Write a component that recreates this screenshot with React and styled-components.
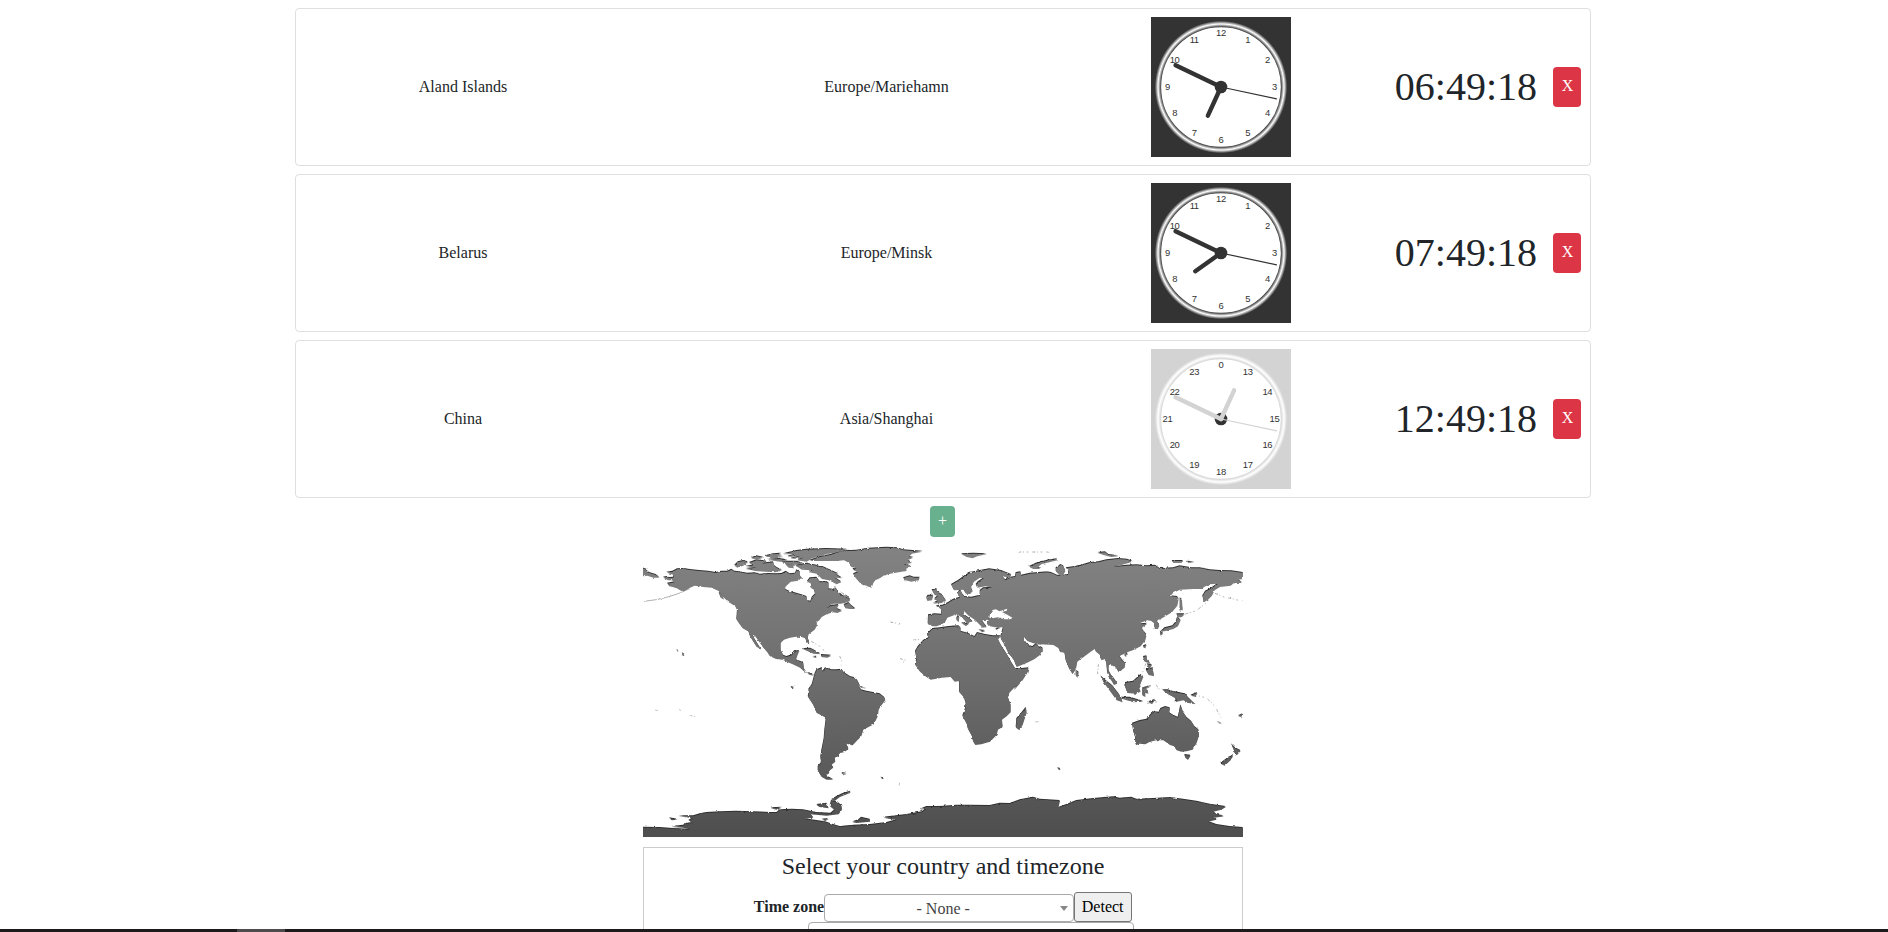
import React from "react";
import styled, { createGlobalStyle } from "styled-components";

const GlobalStyle = createGlobalStyle`
  *, *::before, *::after { box-sizing: border-box; }
  html, body { height: 100%; overflow: hidden; }
  body {
    margin: 0;
    background: #fff;
    color: #212529;
    font: 16px/24px "Liberation Serif", "Times New Roman", serif;
  }
`;

const Page = styled.div`
  height: 932px;
  display: flex;
  flex-direction: column;
`;
const Main = styled.main`
  flex: 1;
  min-height: 0;
  overflow: hidden;
  display: flex;
  flex-direction: column;
  align-items: center;
  padding: 8px 2px 0 0;
`;
const Card = styled.section`
  flex: none;
  width: 1296px;
  height: 158px;
  margin-bottom: 8px;
  padding: 0 8px;
  display: grid;
  grid-template-columns: 318px 529px 140px 246px 44px;
  align-items: center;
  text-align: center;
  border: 1px solid rgba(0, 0, 0, 0.125);
  border-radius: 4px;
`;
const Cell = styled.div`
  min-width: 0;
`;
const Face = styled.svg`
  display: block;
  width: 140px;
  height: 140px;
`;
const Time = styled.div`
  text-align: right;
  font-size: 40px;
  line-height: 48px;
`;
const Button = styled.button`
  flex: none;
  padding: 0 0 2px;
  border: 0;
  border-radius: 4px;
  color: #fff;
  font: inherit;
  width: ${(p) => p.$width}px;
  height: ${(p) => p.$height}px;
  background: ${(p) => p.$color};
`;
const RemoveButton = styled(Button)`
  justify-self: end;
  padding: 0 0 2px 1px;
`;
const AddButton = styled(Button)`
  margin-right: 1px;
  padding-bottom: 1px;
`;
const Map = styled.svg`
  flex: none;
  display: block;
  width: 600px;
  height: 300px;
`;
const Panel = styled.section`
  flex: none;
  width: 600px;
  height: 180px;
  margin-top: 10px;
  border: 1px solid #ccc;
  display: flex;
  flex-direction: column;
  align-items: center;
`;
const Title = styled.h4`
  margin: 4px 0 0;
  font-size: 24px;
  line-height: 29px;
  font-weight: 400;
`;
const Field = styled.div`
  display: flex;
  align-items: flex-end;
  margin: 11px 0 0;
  height: 30px;
`;
const Label = styled.label`
  font-weight: 700;
  line-height: 30px;
`;
const Select = styled.div`
  width: ${(p) => p.$width}px;
  height: 28px;
  margin-left: ${(p) => p.$indent || 0}px;
  padding: 0 5px 0 18px;
  display: flex;
  align-items: center;
  justify-content: space-between;
  color: #444;
  border: 1px solid #aaa;
  border-radius: 4px;
  span { flex: 1; text-align: center; padding: 2px 17px 0 0; }
  i {
    border: solid transparent;
    border-width: 5px 4px 0;
    border-top-color: #888;
  }
`;
const Detect = styled.button`
  width: 58px;
  height: 30px;
  padding: 0 1px 0 0;
  font: inherit;
  color: #000;
  background: #efefef;
  border: 1px solid #767676;
  border-radius: 3px;
`;
const Taskbar = styled.footer`
  flex: none;
  height: 3px;
  padding-left: 237px;
  background: #1c1a1a;
`;
const ActiveTask = styled.div`
  width: 48px;
  height: 3px;
  background: #4d4b4b;
`;

const zones = [
  { country: "Aland Islands", zone: "Europe/Mariehamn", time: "06:49:18", hour: 204.6 },
  { country: "Belarus", zone: "Europe/Minsk", time: "07:49:18", hour: 234.6 },
  { country: "China", zone: "Asia/Shanghai", time: "12:49:18", hour: 24.6, pm: true },
];

function Clock({ hour, pm }) {
  const ink = pm ? "#d3d3d3" : "#333";
  const id = pm ? "rim-pm" : "rim-am";
  const numbers = Array.from({ length: 12 }, (_, i) => {
    const a = ((i + 1) * Math.PI) / 6;
    const n = pm ? (i + 13) % 24 : i + 1;
    return (
      <text key={n} x={53.55 * Math.sin(a)} y={-53.55 * Math.cos(a) + 2.7}>
        {n}
      </text>
    );
  });
  return (
    <Face viewBox="-70 -70 140 140">
      <defs>
        <radialGradient id={id} gradientUnits="userSpaceOnUse" cx="0" cy="0" r="66.15">
          <stop offset=".905" stopColor={ink} />
          <stop offset=".952" stopColor="#fff" />
          <stop offset="1" stopColor={ink} />
        </radialGradient>
      </defs>
      <rect x="-70" y="-70" width="140" height="140" fill={ink} />
      <circle r="63" fill="#fff" stroke={`url(#${id})`} strokeWidth="6.3" />
      <circle r="6.3" fill="#333" />
      <g fill="#333" fontSize="9.45" fontFamily="Liberation Sans, Arial, sans-serif" textAnchor="middle" letterSpacing="-.3">
        {numbers}
      </g>
      <g stroke={ink} strokeLinecap="round">
        <path d="M0 0V-31.5" strokeWidth="4.4" transform={`rotate(${hour})`} />
        <path d="M0 0V-50.4" strokeWidth="4.4" transform="rotate(295.7)" />
        <path d="M0 0V-56.7" strokeWidth="1.2" transform="rotate(102)" />
      </g>
    </Face>
  );
}

// Coastlines are kept as point lists, each measured from the corner of its map sheet.
const NW = [-9, 0];
const N = [591, 0];
const NE = [1191, 0];
const SW = [-9, 420];
const SE = [831, 420];

const trace = (...parts) => {
  const pts = [];
  for (const [[dx, dy], list] of parts) {
    for (const p of list.trim().split(/\s+/)) {
      const [x, y] = p.split(",").map(Number);
      pts.push(`${x + dx} ${y + dy}`);
    }
  }
  return `M${pts.join("L")}Z`;
};
const isles = (sheet, text) => text.split("|").map((s) => trace([sheet, s])).join("");

const land = [
  // North America
  trace(
    [NW, `80,97 98,94 112,87 132,86 150,89 178,92 205,94 228,98 245,94 262,94 275,88 284,94 300,96 322,100 345,99 360,103 385,101 405,102 425,101 438,94 450,102 466,100 470,90 480,96 478,112 470,122 452,124 436,140 436,148 448,154 470,160 490,166 500,170 502,182 512,184 516,172 526,162 522,148 512,142 514,130 502,124 510,114 530,112 540,126 555,125 566,128 566,146 580,150 586,140 592,152 602,164 615,170 631,178`],
    [N, `0,155 14,164 28,172 30,182 14,188 2,190`],
    [NW, `600,190 580,190 558,204 578,196 596,194 590,206 606,212 592,218 580,216 560,222 545,230 538,240 530,246 530,258 524,268 506,282 503,294 508,306 506,314 500,308 497,294 484,290 468,289 450,292 432,298 422,308 422,330 430,346 440,350 456,345 462,334 478,332 472,346 468,360 490,368 492,386 500,398 514,400 522,406 510,404 495,396 480,382 458,372 440,364 428,358 408,356 390,348 382,336 370,322 356,302 346,288 336,282 342,294 352,310 362,326 350,320 340,304 330,288 326,274 308,264 298,250 290,238 292,210 286,198 264,184 250,170 236,152 214,142 190,140 164,136 150,142 138,150 124,152 108,142 88,138 82,130 104,126 96,120 80,114 100,112 102,104`]
  ),
  // Greenland
  trace(
    [NW, `508,62 540,50 572,44 600,34 631,30`],
    [N, `0,33 50,31 86,25 140,22 172,24 190,30 248,34 216,40 206,50 220,52 202,60 216,68 194,72 212,78 198,86 200,92 176,96 150,100 130,106 122,112 106,120 100,128 95,142 82,138 68,134 58,126 48,114 40,102 54,96 38,88 50,84 34,80 28,68 12,60 -10,62`]
  ),
  // South America
  trace(
    [NW, `525,400 530,390 545,384 548,394 556,384 575,390 590,390 605,388 612,398 631,410`],
    [N, `14,405 30,410 46,414 54,424 62,442 80,446`],
    [SW, `656,18 664,30 680,34 700,38 720,42 733,52 736,60 722,78 716,88 714,106 702,132 690,138 670,148 664,168 650,182 638,195 618,190 626,206 612,216 600,218 596,228 584,232 586,244 574,254 580,262 570,270 566,280 558,284 562,290 580,298 560,298 545,290 534,272 534,260 544,248 542,232 546,206 552,176 554,150 558,118 550,108 530,98 520,74 504,50 508,38 506,28 516,14`]
  ),
  // Europe and Asia
  trace(
    [N, `265,225 285,222 305,223 303,206 288,198 308,196 325,188 340,178 360,172 352,162 352,155 362,150 366,160 374,170 395,172 420,166 420,152 430,144 458,142 436,138 412,142 408,134 414,126 432,114 420,112 402,124 392,142 398,152 390,162 378,160 370,148 342,150 334,134 358,120 374,108 390,98 420,92 448,87 484,92 514,104 510,112 486,108 496,120 512,112 526,110 528,98 542,96 544,106 570,100 631,95`],
    [NE, `20,96 34,98 52,106 62,106 48,94 48,84 62,74 70,78 76,92 70,106 84,104 86,92 78,84 104,80 122,76 150,68 176,66 200,60 235,56 262,58 278,64 252,72 222,80 262,76 290,75 320,78 346,76 360,86 400,84 420,78 455,84 480,84 510,90 540,92 575,93 609,98 609,116 594,118 606,128 582,128 572,136 540,140 524,150 516,166 504,178 492,186 488,168 496,154 516,144 534,130 510,132 492,140 486,146 460,146 420,148 404,156 388,166 412,170 416,176 412,196 396,216 376,228 362,236 350,242 358,256 354,266 344,266 344,250 334,242 322,240 300,248 304,252 322,250 306,262 308,270 320,284 316,300 302,318 282,328 262,336 250,342 238,348 246,358 256,370 254,382 236,396 228,382 214,374 206,376 206,392 214,406 224,418 228,430 218,426 206,410 202,396 200,372 196,356 184,360 180,344 168,334 164,326 150,336 134,348 112,364 108,386 98,402 88,386 78,362 74,338 60,334 56,324 40,314 0,312`],
    [N, `606,314 592,312 578,308 562,302 552,290 552,300 566,318 578,320 590,310 596,320 607,328 600,344 584,356 560,368 530,380 522,360 506,340 496,318 484,298 482,290 486,276 490,260 474,262 450,258 442,248 446,238 426,240 432,250 440,260 428,262 414,248 404,238 386,226 372,212 372,224 386,234 398,244 388,246 384,254 374,240 360,228 350,222 338,226 322,232 316,244 306,252 290,258 278,258 264,252`]
  ),
  // Africa
  trace(
    [N, `278,266 300,264 326,260 356,258 362,264 362,274 384,280 404,290 412,278 436,284 460,288 482,288 474,298 484,318 496,336 506,352 516,370 526,386 546,386 566,384 562,398 548,420 522,450`],
    [SE, `290,14 268,38 264,52 272,74 272,96 260,108 246,118 248,140 234,148 230,164 210,184 184,192 166,194 160,184 156,168 144,146 142,134 128,108 136,86 138,72 134,54 118,36 118,0`],
    [N, `356,440 358,422 344,424 332,410 306,412 272,418 256,408 240,394 226,374 230,356 226,334 234,320 250,302 262,294 266,278`]
  ),
  // Australia
  trace([SE, `637,130 660,122 680,118 692,104 704,94 716,98 722,86 736,80 750,84 748,98 760,106 774,112 778,94 782,75 790,98 800,112 814,124 824,140 836,150 837,166 830,188 818,208 800,213 784,214 770,210 762,198 750,194 730,180 710,180 690,184 676,192 658,190 648,195 646,172 640,152`]),
  // Antarctica
  trace(
    [SW, `9,442 60,443 100,446 152,448 130,442 94,440 130,436 140,430 160,428 146,422 158,414 116,408 160,408 180,402 200,398 240,396 290,394 340,396 390,398 410,398 420,390 455,388 490,390 530,398 572,400 584,390 570,378 574,362 592,366 604,376 606,388 596,402 560,406 510,402 520,412 490,416 530,422 556,426 580,434 600,440 640,436 690,434 740,428 770,420 730,412 800,404 846,396 864,382 900,379`],
    [SE, `0,388 20,380 60,380 110,376 150,376 210,377 240,370 270,371 300,360 340,352 360,358 420,362 415,383 440,374 470,362 520,356 580,351 600,355 635,352 650,358 700,356 750,353 790,358 830,364 870,373 918,380 904,388 880,394 890,404 912,408 884,412 890,418 864,424 890,434 930,440 969,443 969,470`],
    [SW, `9,470`]
  ),
  isles(NW, `9,84 18,90 28,98 48,104 58,112 40,112 22,106 9,108|70,112 80,110 104,120 84,120|430,42 470,32 500,28 560,26 622,28 590,36 560,42 520,52 500,64 470,60 490,54 450,56 480,48 440,50 470,42|376,48 400,42 424,40 410,48 430,50 396,54|284,76 294,66 310,62 324,66 310,76 292,82|328,68 350,60 380,64 366,70 400,66 402,76 412,84 426,90 406,96 376,94 346,92 318,86 350,82 316,78 340,76|334,54 350,48 370,52 350,58|382,58 420,56 444,62 420,64|428,64 470,64 490,70 458,74 430,70|436,72 456,74 462,84 446,82|466,76 500,70 530,76 548,84 566,96 590,104 606,114 584,112 604,126 590,132 566,120 546,116 530,100 506,96 516,90 486,88|510,82 548,80 596,102 560,104|464,108 480,106 486,118 470,118|488,326 512,325 542,342 520,340|544,344 574,346 562,352 544,350|518,350 530,349 528,353|236,154 246,164 252,178 242,172|278,186 294,196 290,202|126,338 134,344 130,346|110,330 116,332 113,334|452,440 462,442 458,446`),
  isles(N, `12,194 26,188 34,196 46,206 30,206 16,204|190,114 210,108 222,112 240,112 234,120 214,124 196,120|276,150 290,146 292,156 306,164 318,182 304,188 280,190 294,182 284,176 294,168 284,164|260,172 264,166 280,166 276,180 262,182|364,42 400,40 440,42 412,48 398,54 380,50|568,80 588,70 628,60 631,64 606,70 592,82 606,86 580,86|352,228 358,230 356,246 350,240|364,248 384,252 378,258|416,270 436,272 428,276|466,268 480,262 474,270`),
  isles(NE, `174,38 196,36 206,44 236,48 214,50 190,44|396,62 430,62 424,68 400,68|440,64 464,66 446,68|0,66 50,57 52,60 10,70 0,72|420,174 426,178 428,210 420,214|410,222 434,222 426,230 414,232|412,232 422,240 414,258 400,266 376,272 362,276 374,264 398,258 408,246|360,274 370,280 362,286|310,318 320,314 314,328|252,344 264,340 258,350|108,392 116,396 114,412 108,408|310,350 320,348 322,362 332,370 314,364|318,390 338,384 342,408 326,404|322,372 336,374 328,388|0,320 8,324 8,336 0,336|182,408 198,422 218,438 238,464 248,486 230,480 210,452 192,428|204,400 218,410 232,430 222,434|256,428 280,424 302,404 310,410 302,430 296,444 302,454 288,460 264,456 256,440`),
  isles(SE, `318,82 320,98 308,134 298,150 288,142 290,116 304,100|794,224 812,226 804,239 796,232|934,192 946,204 962,212 948,228 944,214|902,250 926,232 940,226 932,240 914,256|596,52 630,52 670,64 640,66|614,14 634,12 654,2 662,18 650,40 622,38|668,24 694,18 678,26 686,40 676,38 676,50 668,46|728,30 744,30 762,36 796,42 804,52 824,72 806,68 790,60 764,66 770,56 744,42|812,46 832,38 828,50|686,66 706,58 696,72|888,122 906,132 900,130|412,264 422,266 418,270|955,108 968,102 964,110`),
  isles(SW, `88,414 114,418 96,420|638,426 656,420 664,412 690,418 690,424 650,428|546,418 566,416 556,422|574,360 590,350 610,340 632,334 630,338 600,350 584,362|530,374 560,370 566,384 538,380|392,384 426,382 410,388|604,278 620,280 608,282|722,292 732,294 728,297`),
].join("");

const lakes = isles(N, `448,234 450,222 458,210 468,208 478,214 502,206 500,212 486,216 502,224 518,234 510,238 492,238 474,232 460,234`);

function World() {
  return (
    <Map viewBox="0 -9 1800 900">
      <defs>
        <linearGradient id="relief" gradientUnits="userSpaceOnUse" x1="0" y1="0" x2="0" y2="890">
          <stop offset="0" stopColor="#848484" />
          <stop offset=".5" stopColor="#6b6b6b" />
          <stop offset="1" stopColor="#4e4e4e" />
        </linearGradient>
        <filter id="coast" x="0" y="0" width="1" height="1" colorInterpolationFilters="sRGB">
          <feTurbulence type="fractalNoise" baseFrequency=".1" numOctaves="2" seed="4" />
          <feDisplacementMap in="SourceGraphic" scale="7" xChannelSelector="R" yChannelSelector="G" />
        </filter>
      </defs>
      <g filter="url(#coast)">
        <path d={land} fill="#303030" transform="translate(-1 -2)" />
        <path d={land} fill="url(#relief)" transform="translate(0 1)" />
        <path d={lakes} fill="#fff" />
        <g fill="none" stroke="#8a8a8a" strokeWidth="2" strokeDasharray="9 5 3 8 5 12">
          <path d="M3 184L40 179L78 170L108 160L140 146" strokeDasharray="none" />
          <path d="M505 304L530 318L546 334M590 348L597 366L592 388M742 246L774 252M811 300L834 298M771 356L788 360L780 368" />
          <path d="M1627 222L1660 212L1688 190M1716 160L1740 170L1800 184M1509 370L1500 394L1488 406M1366 372L1364 402M1500 444L1516 436M1504 456L1512 440L1526 436M1654 464L1690 474L1712 494L1734 532M1540 434L1546 446L1572 450M1512 490L1552 484M1126 36L1220 36" />
          <path d="M1178 546L1190 544M140 526L158 530M36 510L46 512M108 508L114 512M770 728L768 738" strokeWidth="1.5" />
        </g>
      </g>
      <path d="M0 866L140 872V891H0ZM140 872H1740L1800 866V891H140Z" fill="#4f4f4f" />
    </Map>
  );
}

export default function App() {
  return (
    <Page>
      <GlobalStyle />
      <Main>
        {zones.map((z) => (
          <Card key={z.country}>
            <Cell>{z.country}</Cell>
            <Cell>{z.zone}</Cell>
            <Clock hour={z.hour} pm={z.pm} />
            <Time>{z.time}</Time>
            <RemoveButton $width={28} $height={40} $color="#dc3545">X</RemoveButton>
          </Card>
        ))}
        <AddButton $width={25} $height={31} $color="#69b08f">+</AddButton>
        <World />
        <Panel>
          <Title>Select your country and timezone</Title>
          <Field>
            <Label>Time zone</Label>
            <Select $width={250}>
              <span>- None -</span>
              <i />
            </Select>
            <Detect>Detect</Detect>
          </Field>
          <Select $width={326} $indent={55} />
        </Panel>
      </Main>
      <Taskbar>
        <ActiveTask />
      </Taskbar>
    </Page>
  );
}
